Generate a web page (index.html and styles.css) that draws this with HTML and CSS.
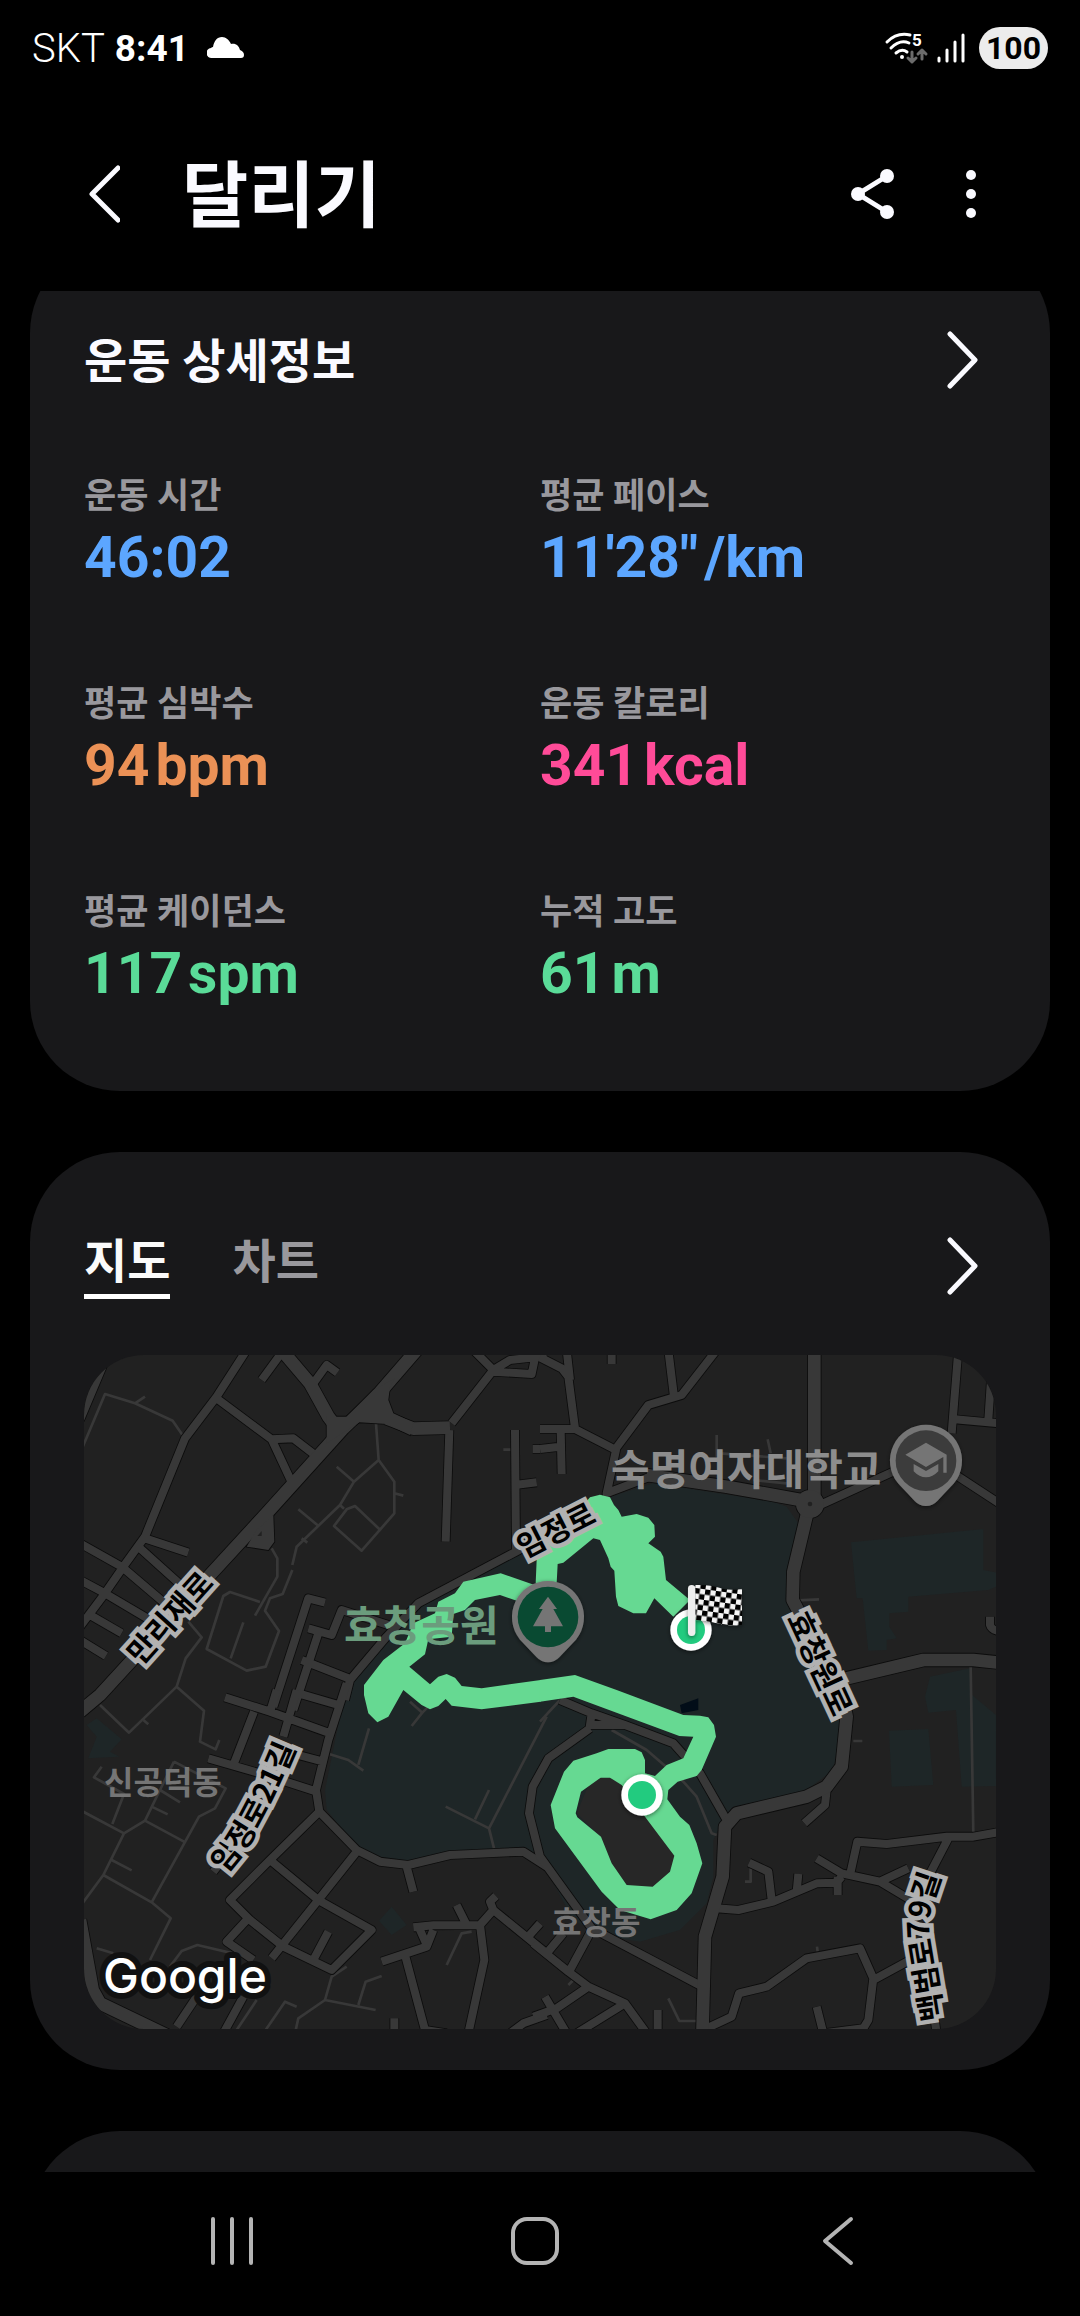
FILE: index.html
```html
<!DOCTYPE html>
<html lang="ko">
<head>
<meta charset="utf-8">
<meta name="viewport" content="width=device-width, initial-scale=1">
<title>달리기</title>
<link rel="stylesheet" href="styles.css">
</head>
<body>
<div class="status">
  <div class="status-side">
    <span class="carrier">SKT</span>
    <span class="clock">8:41</span>
    <svg class="cloud" width="38" height="22" viewBox="0 0 38 22" aria-hidden="true"><path d="M5 21a5 5 0 0 1-1-10 3 3 0 0 1 2-1C7 4 10 0 15 0c4 0 7 3 9 7 5-1 8 2 9 6 3 1 4 3 4 5s-1 3-3 3Z" fill="#fff"/></svg>
  </div>
  <div class="status-side status-right">
    <svg class="wifi" width="42" height="32" viewBox="0 0 42 32" fill="none" aria-hidden="true">
      <g stroke="#fff" stroke-width="3" stroke-linecap="round"><path d="M2 10Q12 0 25 3"/><path d="M6 16q9-9 18-5"/><path d="M11 21q6-5 11-1"/></g>
      <circle cx="17" cy="25" r="2" fill="#fff"/>
      <text class="band" x="27" y="14" fill="#fff">5</text>
      <g stroke="#6c6c6c" stroke-width="3" stroke-linecap="round" stroke-linejoin="round"><path d="M27 20v10m-4-4 4 4 4-4M37 27V18m-4 4 4-4 4 4"/></g>
    </svg>
    <svg width="28" height="32" viewBox="0 0 28 32" stroke="#fff" stroke-width="3" stroke-linecap="round" aria-hidden="true"><path d="M2 26v3M10 18v11M18 10v19M26 3v26"/></svg>
    <span class="battery">100</span>
  </div>
</div>
<header class="bar">
  <button class="icon-button" aria-label="뒤로"><svg width="32" height="60" viewBox="0 0 32 60"><path class="line" d="M30 4 4 30l26 26"/></svg></button>
  <h1>달리기</h1>
  <button class="icon-button share" aria-label="공유"><svg width="46" height="52" viewBox="0 0 46 52" fill="#fafaff"><path d="M37 8 8 26l29 18" fill="none" stroke="#fafaff" stroke-width="5"/><circle cx="37" cy="8" r="7"/><circle cx="8" cy="26" r="7"/><circle cx="37" cy="44" r="7"/></svg></button>
  <button class="icon-button more" aria-label="더보기"><svg width="12" height="52" viewBox="0 0 12 52" fill="#fafaff"><circle cx="6" cy="7" r="5"/><circle cx="6" cy="26" r="5"/><circle cx="6" cy="45" r="5"/></svg></button>
</header>
<main>
  <section class="card details">
    <div class="card-head">
      <h2>운동 상세정보</h2>
      <button class="icon-button" aria-label="운동 상세정보 열기"><svg width="32" height="60" viewBox="0 0 32 60"><path class="line" d="m4 4 25 26L4 56"/></svg></button>
    </div>
    <dl class="stats">
      <div><dt>운동 시간</dt><dd class="blue">46:02</dd></div>
      <div><dt>평균 페이스</dt><dd class="blue"><span>11'28"</span><span>/km</span></dd></div>
      <div><dt>평균 심박수</dt><dd class="orange"><span>94</span><span>bpm</span></dd></div>
      <div><dt>운동 칼로리</dt><dd class="pink"><span>341</span><span>kcal</span></dd></div>
      <div><dt>평균 케이던스</dt><dd class="green"><span>117</span><span>spm</span></dd></div>
      <div><dt>누적 고도</dt><dd class="green"><span>61</span><span>m</span></dd></div>
    </dl>
  </section>
  <section class="card route">
    <div class="card-head">
      <div class="tabs" role="tablist">
        <button role="tab" aria-selected="true" class="tab active">지도</button>
        <button role="tab" aria-selected="false" class="tab">차트</button>
      </div>
      <button class="icon-button" aria-label="지도 열기"><svg width="32" height="60" viewBox="0 0 32 60"><path class="line" d="m4 4 25 26L4 56"/></svg></button>
    </div>
    <svg class="map" viewBox="0 0 912 674" role="img" aria-label="달리기 경로 지도">
      <defs>
        <pattern id="check" width="32" height="32" patternUnits="userSpaceOnUse" patternTransform="rotate(8) translate(6 2)"><path d="M0 0h32v32H0z" fill="#f4f4f4"/><path d="M0 0h16v16H0zM16 16h16v16H16z"/></pattern>
        <filter id="shade" x="-20%" y="-20%" width="140%" height="140%"><feDropShadow dx="0" dy="4" stdDeviation="6" flood-color="#000" flood-opacity=".5"/></filter>
        <path id="pin" d="M0-108A108 108 0 0 1 84 68L34 121Q20 136 0 136T-34 121L-84 68A108 108 0 0 1 0-108Z"/>
        <g id="streets">
          <path d="M500 0 410 140 315 265 195 560 130 650 75 730 0 830M410 145 575 268 640 265 705 315M575 268 632 390M600 15 545 90M700 100 740 45 772 68M1180 0 1240 60 1115 220M1240 65 1355 72 1370 0M1240 60 1290 30 1400 18M1108 240 1097 575M1305 240 1308 600M1305 405 1370 397M1358 297H1380M1400 555 1308 605 1015 760 920 860 810 990 795 1050M195 565 325 608M175 590 330 730M0 580 125 650 290 790M0 690 75 730 210 810M30 795 125 850M0 870 78 918M735 758 685 745 580 1070M940 830 785 780 755 855 685 835M715 850 640 1080M665 930 805 985M80 20 0 210"/>
          <g transform="translate(1380 0)"><path d="M0 22 65 55 85 80 105 235M80 0 90 90M215 0V42M385 0 402 140M530 0 425 135 325 165 228 295M0 237H105L228 300 200 430 330 380M0 297 60 290M62 240 65 372M840 465 1060 365M1240 370 1400 475M1255 0 1235 250M1245 208 1400 222M1355 60 1345 210M1350 800v25q5 18 40 20"/></g>
          <g transform="translate(0 1020)"><path d="M435 22 570 65 750 130M522 65 462 220M590 0 572 60M655 10 775 45M650 0 610 140M655 195 730 215M385 205 540 250 710 305M420 520 400 545M800-20 745 150 708 300 718 365 830 480 900 515 985 525 1110 495 1330 485 1400 530M718 365 570 510 450 630 510 690 610 770 755 840 875 720 715 630 570 510M830 485 715 630 575 805M500 690 440 755 520 810M745 725 700 810M980 530 1000 605M1000 712 1060 706 1200 705 1240 660 1400 790M1240 660 1230 635 1248 618M1130 645 1160 705M1200 705 1213 810 1165 1030M1060 720 1040 770 905 815M1018 715 1040 765M975 795 1035 1020 1100 1030M1340 745 1380 700M943 985V1030M1290 1030 1330 1000 1400 975M350 920 290 1010M490 920 430 1030"/></g>
          <g transform="translate(1380 1020)"><path d="M155 720 90 840M70 730 20 790M-20 760 85 845 145 890 255 940 320 1030M145 890 50 955-20 980M15 920 80 1030M255 940 110 1030M353 960V1030M500 1015 575 980 597 910 680 890 800 805 960 775 1000 865 985 990 970 1015 850 1030M830 950 850 1030M1000 870 1120 805M530 655 595 660 700 635 830 580 890 578 905 560M893 560V615M695 630 685 545 627 518M770 605 775 552M830 505 905 550 1020 575 1120 635M930 555 952 455 1040 462 1220 440 1300 440 1400 422M1225 445 1165 560M1020 575 1105 535M1180 960 1190 1030M860 300 855 345 793 400M60 30 155 70 255 105 400 160 480 250 560 390M155 70 150 105 255 105M150 115 25 205-22 290-33 370 0 500 155 715 487 890"/></g>
        </g>
        <g id="avenues">
          <path d="M1010 0 880 150 790 235 560 490 390 675 60 1035 0 1085M605 0 690 100 745 200 775 240M920 205 1000 236 1110 233"/>
          <path d="M0 1710 38 1920 60 1960 290 2070"/>
          <path d="M2203 0V440M1700 375 1940 410 2190 455 2140 665 2138 750 2180 830 2280 1000 2300 1100 2285 1250 2240 1310 2180 1340 1970 1390 1935 1430 1928 1580 1875 1760 1867 2060M2300 985 2530 930 2680 930 2780 940"/>
        </g>
        <g id="junctions">
          <path d="M945 85 930 110 925 150 940 190 1000 218 990 255 920 222 838 217 740 280V200L800 200 880 120ZM580 495 583 575 565 600 500 590 530 540Z"/>
          <circle cx="2190" cy="462" r="42"/>
        </g>
      </defs>
      <rect class="land" width="912" height="674"/>
      <g transform="translate(-4 -5) scale(.33333)">
        <g class="park">
          <path d="M1300 610 1020 765 900 880 820 980 790 1050 735 1320 740 1380 820 1480 900 1525 975 1535 1110 1505 1340 1495 1380 1520 1410 1580 1480 1710 1560 1755 1680 1775 1800 1740 1880 1660 1900 1580 1900 1470 1935 1400 1970 1370 2180 1320 2260 1260 2285 1120 2280 1020 2160 800 2120 740 2120 660 2155 520 2120 470 2080 455 1720 400 1590 440Z"/>
          <path d="M2313 577 2710 537V660L2760 670V705L2725 720 2485 740V785L2428 790V830L2450 865 2420 870V900L2365 902 2348 745H2330ZM2535 1040 2550 980 2620 965 2670 955V1030L2748 1095V1308L2645 1310 2628 1080 2545 1088ZM2427 1142 2545 1137 2560 1305 2435 1310ZM50 1105 125 1168 90 1205 118 1220 25 1225 50 1160 20 1125ZM935 1670 980 1725 935 1755 897 1712Z"/>
        </g>
        <path class="pond" d="m1800 1065 55-20v35l-50 10Z"/>
        <g class="paths">
          <path d="M0 310 75 132 165 160 278 212 312 262M165 160 195 140M888 220 896 330 943 395V490L845 602 762 528 800 478 825 468 903 542M896 330 822 395 780 465 650 590 637 645M780 465 792 476M665 565 682 578M770 350 822 395M655 478 712 525M637 660 608 732 570 745 555 782 597 843 557 950 500 962 380 897 430 738 450 726 540 756M575 595 592 625V680L525 797M490 817 452 925M943 430 970 437M1270 299H1300M325 815 365 862 317 925 290 1010 147 1148 60 1065M290 1010 372 1082 360 1175 407 1198 418 1170"/>
          <g transform="translate(1380 0)"><path d="M530 255V320M683 268 692 310M540 310 740 325M775 751 837 748M640 390 740 400"/></g>
          <g transform="translate(0 1020)"><path d="M190 90 205 103M65 230 42 262 132 312 97 402M282 215 437 295 405 355 357 380 215 637 272 685 210 810M0 360 132 430 195 392 312 455M132 430 70 555 0 650M70 555 215 637M95 510 155 541M195 392 240 300 282 215M240 300 300 337M215 350 263 373M867 115 835 225M750 193 805 210 850 242M1400 80 1227 415 1097 350M1227 300 1185 388M1227 415 1242 475M990 35 1027 68 995 108M1027 68 1045 50M800 830 755 860 735 930 887 960M835 945 857 875 905 858M735 930 655 985 645 1030M650 950 615 935 550 1030M530 930 470 1020M270 830 305 783 352 765 500 800M50 775 100 790M1175 725 1145 730 1100 825"/></g>
          <g transform="translate(1380 1020)"><path d="M215 120 320 180 430 275 470 320 515 430 530 435M1292-70 1300 430M940 153H967M632 535V575H615M385 925 418 993H470M0 95 60 30M831 770 833 785M85 885 100 870"/></g>
        </g>
        <use href="#streets" class="street-edge"/>
        <use href="#avenues" class="avenue-edge"/>
        <use href="#junctions" class="junction-edge"/>
        <use href="#streets" class="street"/>
        <use href="#avenues" class="avenue"/>
        <use href="#junctions" class="junction"/>
        <path class="land" d="m532 558 13-15v15Z"/><circle class="land" cx="2190" cy="462" r="7"/>
        <path class="track" d="M1620 1270H1540L1490 1390 1560 1460 1620 1620H1730L1800 1530 1700 1390Z"/>
        <g class="trail">
          <path d="M1400 715 1355 702 1262 670 1150 695 1125 730 1075 755 1065 790 1000 820 975 880 910 930 852 1005V1035L865 1090 892 1117 925 1100 970 1020 1025 1065 1050 1078 1075 1068 1097 1047 1115 1067 1205 1078 1382 1055V990L1205 1015 1145 1008 1125 983 1100 972 1075 980 1050 1003 988 950 1035 913 1045 868 1115 860 1120 792 1155 780 1185 750 1260 735 1310 752 1400 770Z"/>
          <path transform="translate(1380 0)" d="M-13 700-10 630 0 590 130 500V465L150 442 180 434 210 442 222 465 235 480 245 500 290 492 325 503 343 525 345 560 325 580 362 605 370 620 378 690 450 750 400 800 343 745 318 790 280 790 235 768 228 740 223 662 212 650 205 625 180 570 160 565 70 638 53 642 50 700Z"/>
          <path fill-rule="evenodd" transform="translate(1380 1020)" d="M315 250V210L305 187 285 177H205L170 190 100 212 72 245 32 345 45 415 185 605 240 660 332 688 410 660 455 610 487 520 470 460 448 405 420 380 382 328 385 300 413 275 470 258 485 240 528 140 522 105 505 82 480 77 430 75 230 0 105-45 0-30V35L100 20 418 138 460 140 430 205 380 225 345 258ZM245 285 210 263H182L123 305 107 370 112 382 183 440 215 520 260 585 338 590 390 545 403 497 315 380Z"/>
        </g>
      </g>
      <defs>
        <path id="curve-a" d="M141 519Q174 486 214 388"/>
        <path id="curve-b" d="M860 664 846 580Q842 560 858 520"/>
      </defs>
      <g class="street-names">
        <text transform="translate(94 270) rotate(-48)" text-anchor="middle">만리재로</text>
        <text transform="translate(477 185) rotate(-27)" text-anchor="middle">임정로</text>
        <text transform="translate(726 313) rotate(65)" text-anchor="middle">효창원로</text>
        <text><textPath href="#curve-a">임정로21길</textPath></text>
        <text><textPath href="#curve-b">백범로79길</textPath></text>
      </g>
      <g class="areas"><text x="20" y="439">신공덕동</text><text x="468" y="579">효창동</text></g>
      <text class="place park-name" x="260" y="286">효창공원</text>
      <text class="place" x="527" y="130">숙명여자대학교</text>
      <g transform="translate(-4 -5) scale(.33333)">
        <g transform="translate(2538 332)"><use href="#pin" fill="#757575" filter="url(#shade)"/><circle r="91" fill="#3c3c3c"/><path fill="#757575" d="M0-54 62-18V36H52V-11L0 19-62-18ZM-37 10 0 31 37 10V32Q20 50 0 50T-37 32Z"/></g>
        <g transform="translate(1404 801)"><use href="#pin" fill="#757575" filter="url(#shade)"/><circle r="91" fill="#094a32"/><path fill="#757575" d="M0-61 27-24H16L45 28H9V45H-9V28H-45L-16-24H-27Z"/></g>
        <g filter="url(#shade)"><circle cx="1686" cy="1335" r="62" fill="#fff"/><circle cx="1833" cy="840" r="62" fill="#fff"/></g>
        <circle cx="1686" cy="1335" r="42" fill="#22cb7f"/><circle cx="1833" cy="840" r="42" fill="#22cb7f"/>
        <g filter="url(#shade)"><path fill="url(#check)" d="M1846 705Q1890 704 1920 714T1986 716V824Q1950 830 1910 820T1846 810Z"/><rect x="1824" y="705" width="22" height="153" rx="11" fill="#eee"/></g>
      </g>
      <text class="google" x="19" y="638">Google</text>
    </svg>
  </section>
  <section class="card next"></section>
</main>
<nav class="system-nav">
  <button aria-label="최근 앱"><svg width="48" height="50" viewBox="0 0 48 50"><path d="M4 3v44M23 3v44M42 3v44"/></svg></button>
  <button aria-label="홈"><svg width="50" height="50" viewBox="0 0 50 50"><rect x="3" y="3" width="44" height="44" rx="14"/></svg></button>
  <button aria-label="뒤로"><svg width="34" height="50" viewBox="0 0 34 50"><path d="M30 3 4 25l26 22"/></svg></button>
</nav>
</body>
</html>
```
FILE: styles.css
```css
* { box-sizing: border-box; }
body {
  margin: 0;
  height: 100vh;
  display: flex;
  flex-direction: column;
  background: #000;
  color: #fafaff;
  font-family: Roboto, "Noto Sans CJK KR", sans-serif;
}
button { border: 0; padding: 0; background: none; color: inherit; font: inherit; }
h1, h2, dl, dd { margin: 0; }
svg { display: block; flex: none; }

.status {
  display: flex;
  align-items: center;
  justify-content: space-between;
  height: 96px;
  padding: 0 32px;
  color: #fff;
}
.status-side { display: flex; align-items: center; gap: 10px; }
.carrier { font-size: 40px; font-weight: 300; }
.clock { font-size: 37px; font-weight: 700; }
.cloud { margin-left: 8px; }
.wifi { overflow: visible; }
.band { font-size: 17px; font-weight: 700; }
.battery {
  margin-left: 4px;
  padding: 0 7px;
  border-radius: 21px;
  background: #ececec;
  color: #000;
  font-size: 32px;
  font-weight: 700;
  line-height: 42px;
}

.bar {
  display: flex;
  align-items: center;
  height: 195px;
  padding: 0 103px 0 88px;
}
.bar h1 { flex: 1; margin-left: 62px; padding-top: 6px; font-size: 72px; line-height: 88px; font-weight: 700; }
.more { margin-left: 69px; }
.line { fill: none; stroke: #fafaff; stroke-width: 5; stroke-linecap: round; stroke-linejoin: round; }

main {
  flex: 1;
  min-height: 0;
  overflow: hidden;
  display: flex;
  flex-direction: column;
  gap: 61px;
  padding: 0 30px;
}
.card { flex: none; border-radius: 90px; background: #18181a; }
.details { margin-top: -48px; padding: 84px 54px 81px; }
.route { padding: 80px 54px 41px; }
.next { min-height: 400px; }
.card-head { display: flex; align-items: center; justify-content: space-between; padding-right: 18px; }
.card-head h2 { padding-top: 5px; font-size: 47px; line-height: 60px; font-weight: 700; }

.stats { display: grid; grid-template-columns: 1fr 1fr; row-gap: 86px; margin-top: 80px; }
.stats dt { color: #99989d; font-size: 35px; line-height: 50px; font-weight: 700; }
.stats dd { display: flex; gap: 6px; font-size: 57px; line-height: 72px; font-weight: 700; }
.blue { color: #5ca6ff; }
.orange { color: #eb9156; }
.pink { color: #ff4b98; }
.green { color: #5adb98; }

.tabs { display: flex; gap: 62px; }
.tab { padding: 0 0 2px; border-bottom: 5px solid transparent; color: #99989d; font-size: 47px; line-height: 60px; font-weight: 700; }
.active { border-color: #fff; color: #fafafa; }
.map { width: 100%; height: auto; margin-top: 56px; border-radius: 60px; }

.land { fill: #212121; }
.park { fill: #1e2627; }
.pond { fill: #020d18; }
.track { fill: #272727; }
.trail { fill: #66d992; }
.paths, .street, .avenue, .street-edge, .avenue-edge { fill: none; stroke: #383838; stroke-linejoin: round; }
.paths { stroke-width: 8; }
.street { stroke-width: 24; }
.avenue { stroke-width: 38; }
.street-edge { stroke: #0c0c0c; stroke-width: 29; }
.avenue-edge { stroke: #0c0c0c; stroke-width: 43; }
.junction { fill: #383838; }
.junction-edge { fill: #0c0c0c; stroke: #0c0c0c; stroke-width: 5; }
.map text { font-family: "Noto Sans CJK KR", sans-serif; font-weight: 700; }
.street-names { fill: #000; stroke: #b1b1b1; stroke-width: 9; paint-order: stroke; font-size: 30px; }
.areas { fill: #757575; font-size: 32px; }
.place { fill: #8d8d8d; font-size: 42px; }
.park-name { fill: #6b9c7d; }
.map .google { fill: #fff; stroke: #111; stroke-width: 12; stroke-linejoin: round; paint-order: stroke; font-family: Inter, sans-serif; font-size: 48px; font-weight: 500; }

.system-nav {
  display: grid;
  grid-template-columns: repeat(3, 1fr);
  flex: none;
  height: 144px;
  padding: 0 91px 6px 82px;
}
.system-nav button { display: grid; place-items: center; }
.system-nav svg { fill: none; stroke: #b4b4b4; stroke-width: 4; stroke-linecap: round; stroke-linejoin: round; }
```
